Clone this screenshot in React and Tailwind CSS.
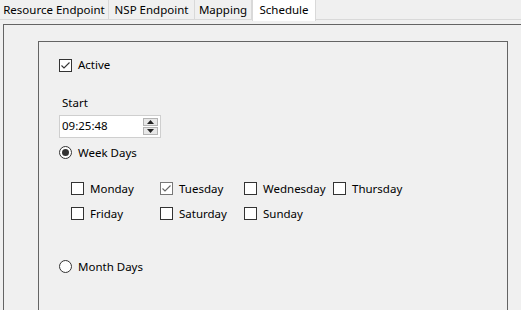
import React from 'react';

const Check = ({ checked, muted }) => (
    <span className={`w-[13px] h-[13px] border bg-white flex items-center justify-center shrink-0 ${muted ? 'border-[#777]' : 'border-[#333]'}`}>
        {checked && (
            <svg width="11" height="11" viewBox="0 0 11 11">
                <path d="M1.5 5.5 L4 8 L9.5 2.5" fill="none" stroke={muted ? '#666' : '#333'} strokeWidth="1.1" />
            </svg>
        )}
    </span>
);

const Radio = ({ checked }) => (
    <span className="w-[13px] h-[13px] rounded-full border border-[#333] bg-white flex items-center justify-center shrink-0">
        {checked && <span className="w-[7px] h-[7px] rounded-full bg-[#333]"></span>}
    </span>
);

const Option = ({ label, children }) => (
    <div className="flex items-center gap-[6px] h-[14px]">
        {children}
        <span className="leading-none">{label}</span>
    </div>
);

const tabs = [
    { label: 'Resource Endpoint', w: 'w-[109px]' },
    { label: 'NSP Endpoint', w: 'w-[86px]' },
    { label: 'Mapping', w: 'w-[57px]' }
];

const days = [
    ['Monday', false], ['Tuesday', true], ['Wednesday', false], ['Thursday', false],
    ['Friday', false], ['Saturday', false], ['Sunday', false]
];

const App = () => {
    return (
        <div className="w-[521px] h-[310px] bg-[#f0f0f0] overflow-hidden text-[11.5px] text-black" style={{ fontFamily: '"Noto Sans", "Open Sans", sans-serif' }}>
            {/* Tabs */}
            <div className="flex h-[20px] border-b border-[#d9d9d9] relative">
                {tabs.map(t => (
                    <div key={t.label} className={`${t.w} h-[19px] border-r border-[#d9d9d9] flex items-center justify-center whitespace-nowrap`}>
                        {t.label}
                    </div>
                ))}
                <div className="w-[64px] h-[22px] -mt-[1px] bg-white border-x border-[#d9d9d9] flex items-center justify-center z-10">
                    Schedule
                </div>
            </div>

            {/* Page */}
            <div className="ml-[3px] mt-[4px] h-[300px] border-l border-t border-[#646464]">
                <div className="ml-[34px] mt-[16px] w-[470px] h-[300px] border border-[#646464] pl-[20px] pt-[16px]">
                    <Option label="Active"><Check checked /></Option>

                    <div className="mt-[25px] pl-[3px] leading-none">Start</div>
                    <div className="mt-[6px] w-[102px] h-[23px] bg-white border border-[#cfcfcf] flex items-center pl-[2px]">
                        <span className="flex-1 leading-none">09:25:48</span>
                        <div className="flex flex-col gap-[1px] mr-[2px]">
                            <div className="w-[15px] h-[8px] bg-[#e8e8e8] border border-[#b4b4b4] flex items-center justify-center">
                                <svg width="7" height="4" viewBox="0 0 7 4"><path d="M3.5 0 L7 4 L0 4 Z" fill="#222" /></svg>
                            </div>
                            <div className="w-[15px] h-[8px] bg-[#e8e8e8] border border-[#b4b4b4] flex items-center justify-center">
                                <svg width="7" height="4" viewBox="0 0 7 4"><path d="M0 0 L7 0 L3.5 4 Z" fill="#222" /></svg>
                            </div>
                        </div>
                    </div>

                    <div className="mt-[8px]"><Option label="Week Days"><Radio checked /></Option></div>

                    <div className="mt-[22px] pl-[12px] grid grid-cols-[89px_84px_89px_auto] gap-y-[11px]">
                        {days.map(([d, c]) => (
                            <Option key={d} label={d}><Check checked={c} muted={c} /></Option>
                        ))}
                    </div>

                    <div className="mt-[39px]"><Option label="Month Days"><Radio /></Option></div>
                </div>
            </div>
        </div>
    );
};

export default App;
